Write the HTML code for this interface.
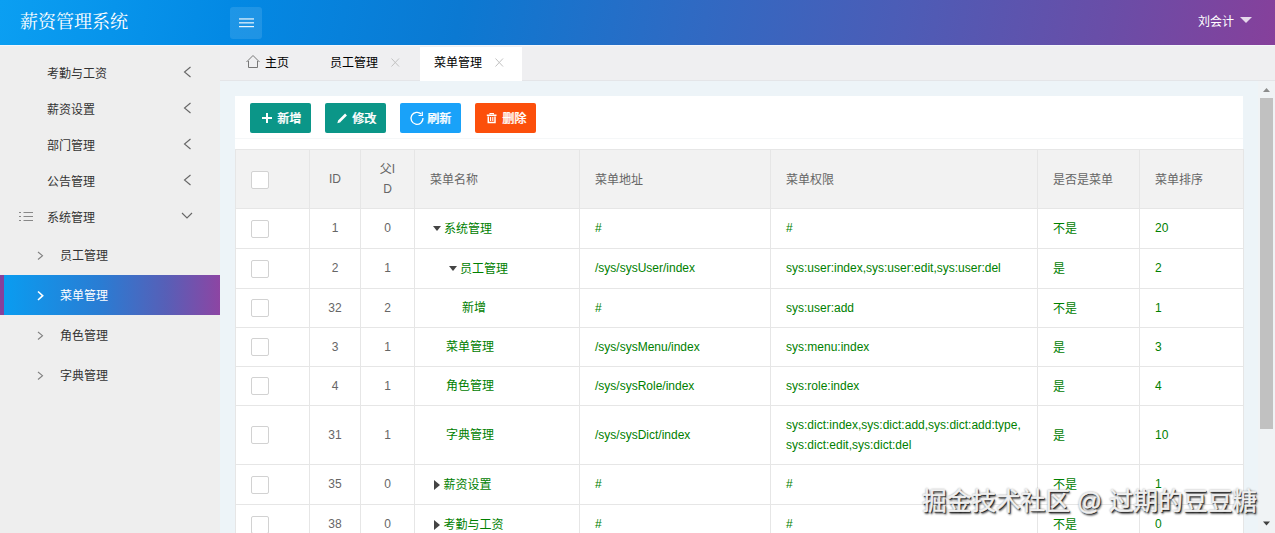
<!DOCTYPE html>
<html lang="zh-CN">
<head>
<meta charset="utf-8">
<title>薪资管理系统</title>
<style>
*{box-sizing:border-box;margin:0;padding:0}
html,body{width:1275px;height:533px;overflow:hidden;background:#eeeeee;font-family:"Liberation Sans","Noto Sans CJK SC",sans-serif;font-size:12px;color:#333}
#hdr{position:absolute;left:0;top:0;width:1275px;height:45px;background:linear-gradient(100deg,#0b9ff2 0%,#0389e4 18%,#0b79d2 36%,#2f6ac3 54%,#4d5cb6 71%,#6a4da7 87%,#86409b 100%)}
#hline{position:absolute;left:0;top:45px;width:1275px;height:1px;background:#f4f6fb}
#title{position:absolute;left:20px;top:10px;font-family:"Liberation Serif","Noto Serif CJK SC",serif;font-size:18px;line-height:24px;color:#fff;white-space:nowrap}
#ham{position:absolute;left:230px;top:7px;width:32px;height:32px;border-radius:3px;background:rgba(255,255,255,.11)}
#ham i{position:absolute;left:9px;width:15px;height:1.4px;background:#fff}
#user{position:absolute;left:1198px;top:14px;color:#fff;font-size:12px;line-height:16px;white-space:nowrap}
#caret{position:absolute;left:1240px;top:17px;width:0;height:0;border-left:6px solid transparent;border-right:6px solid transparent;border-top:6px solid rgba(255,255,255,.8)}
#side{position:absolute;left:0;top:46px;width:220px;height:487px;background:#eeeeee}
.mi{position:absolute;left:47px;font-size:12px;line-height:16px;color:#333;white-space:nowrap}
.si{position:absolute;left:60px;font-size:12px;line-height:16px;color:#333;white-space:nowrap}
#act{position:absolute;left:0;top:275px;width:220px;height:40px;background:linear-gradient(90deg,#0a9cf0 0%,#2a7cd3 45%,#575fb7 75%,#8d45a3 100%);border-left:4px solid #86409b}
svg{position:absolute;overflow:visible}
#tabs{position:absolute;left:220px;top:46px;width:1055px;height:35px;background:#efeff1;border-bottom:1px solid #e4e5e8}
#tabact{position:absolute;left:420px;top:47px;width:102px;height:34px;background:#fff}
.tb{position:absolute;top:55px;font-size:12px;line-height:16px;color:#000;white-space:nowrap}
#main{position:absolute;left:220px;top:81px;width:1040px;height:452px;background:#edf4f8}
#panel{position:absolute;left:235px;top:96px;width:1008px;height:437px;background:#fff}
#pline{position:absolute;left:235px;top:138px;width:1008px;height:1px;background:#f5f7f8}
.btn{position:absolute;top:103px;width:61px;height:30px;border-radius:2px;color:#fff;font-size:12px;line-height:30px;white-space:nowrap;font-weight:normal;text-shadow:.7px 0 0 #fff}
.btn span{position:absolute;left:27px;top:1px}
#sb{position:absolute;left:1258px;top:81px;width:17px;height:452px;background:#f0f3f5}
#thumb{position:absolute;left:1260px;top:98px;width:13px;height:331px;background:#c1c1c1}
table{position:absolute;left:235px;top:149px;border-collapse:collapse;table-layout:fixed;width:1008px;font-size:12px}
td,th{border:1px solid #e6e6e6;padding:0 15px 1px;text-align:left;font-weight:normal;color:#008000;line-height:20px;vertical-align:middle;white-space:nowrap}
th{background:#f2f2f2;color:#666;height:59px}
td.c,th.c{text-align:center;color:#666;padding:0 0 1px}
td.z,th.z{padding:1px 15px 0}
.cb{display:inline-block;width:18px;height:18px;border:1px solid #d2d2d2;border-radius:2px;background:#fff;vertical-align:middle;position:relative;top:0}
.ar{display:inline-block;width:0;height:0;vertical-align:middle;position:relative}
.ad{border-left:4.5px solid transparent;border-right:4.5px solid transparent;border-top:5px solid #444;margin:0 3px 0 3px;top:-1px}
.arr{border-top:5px solid transparent;border-bottom:5px solid transparent;border-left:6.5px solid #444;margin:0 4px 0 3.5px;top:-1px}
#wm{position:absolute;left:922px;top:485px;-webkit-text-stroke:.5px #f0f0f0;font-size:24.7px;line-height:34px;color:#f0f0f0;white-space:nowrap;text-shadow:1px 1px 0 rgba(0,0,0,.7),1.5px 1.5px 2px rgba(0,0,0,.75),0 0 2px rgba(0,0,0,.45)}
</style>
</head>
<body>
<div id="hdr"></div><div id="hline"></div>
<div id="title">薪资管理系统</div>
<div id="ham"></div>
<svg style="left:0;top:0" width="300" height="45" fill="#fff"><rect x="239" y="18.400" width="15" height="1.100"/><rect x="239" y="22.300" width="15" height="1.100"/><rect x="239" y="26.100" width="15" height="1.100"/></svg>
<div id="user">刘会计</div><div id="caret"></div>

<div id="side"></div>
<div class="mi" style="top:66px">考勤与工资</div>
<div class="mi" style="top:102px">薪资设置</div>
<div class="mi" style="top:138px">部门管理</div>
<div class="mi" style="top:174px">公告管理</div>
<div class="mi" style="top:210px">系统管理</div>
<svg style="left:0;top:0" width="220" height="533" fill="none" stroke="#666" stroke-width="1.1">
<path d="M190.5 67 L184.5 72 L190.5 77"/>
<path d="M190.5 103 L184.5 108 L190.5 113"/>
<path d="M190.5 139 L184.5 144 L190.5 149"/>
<path d="M190.5 175 L184.5 180 L190.5 185"/>
<path d="M182 213 L187 218 L192 213"/>
<path d="M19 212.5h2M23.5 212.5h9.5M19 216.5h2M23.5 216.5h9.5M19 220.5h2M23.5 220.5h9.5" stroke="#888" stroke-width="1"/>
<path d="M38 252 L42.5 255.7 L38 259.5" stroke="#808080"/>
<path d="M38 332 L42.5 335.7 L38 339.5" stroke="#808080"/>
<path d="M38 372 L42.5 375.7 L38 379.5" stroke="#808080"/>
</svg>
<div id="act"></div>
<svg style="left:0;top:0" width="220" height="533" fill="none" stroke="#fff" stroke-width="1.6"><path d="M38 291.5 L42.7 295.7 L38 300"/></svg>
<div class="si" style="top:248px">员工管理</div>
<div class="si" style="top:288px;color:#fff">菜单管理</div>
<div class="si" style="top:328px">角色管理</div>
<div class="si" style="top:368px">字典管理</div>

<div id="tabs"></div>
<div id="tabact"></div>
<svg style="left:0;top:0" width="600" height="90" fill="none" stroke="#777" stroke-width="1">
<path d="M246.5 62 L253 55.5 L259.5 62"/><path d="M248.5 61 V67.5 H257.5 V61"/>
<path d="M391.5 58.5 L399 66.5 M399 58.5 L391.5 66.5" stroke="#c2c2c2"/>
<path d="M495.5 58.5 L503 66.5 M503 58.5 L495.5 66.5" stroke="#c2c2c2"/>
</svg>
<div class="tb" style="left:265px">主页</div>
<div class="tb" style="left:330px">员工管理</div>
<div class="tb" style="left:434px">菜单管理</div>

<div id="main"></div>
<div id="panel"></div><div id="pline"></div>
<div class="btn" style="left:250px;background:#0b9688"><span>新增</span></div>
<div class="btn" style="left:325px;background:#0b9688"><span>修改</span></div>
<div class="btn" style="left:400px;background:#19a2f9"><span>刷新</span></div>
<div class="btn" style="left:475px;background:#fc4f0b"><span>删除</span></div>
<svg style="left:0;top:0" width="600" height="140" fill="none" stroke="#fff">
<path d="M262 118h10M267 113v10" stroke-width="2"/>
<path d="M339 121.5 L346 114.5" stroke-width="2.6"/><path d="M337.3 123.2 L338.2 120.2 L340.3 122.3 Z" fill="#fff" stroke="none"/>
<path d="M421.2 114 A6 6 0 1 0 423 118" stroke-width="1.3"/><path d="M418.5 115.5 H422.3 V111.7" stroke-width="1.2"/>
<path d="M486.800 115.300h9.700" stroke-width="1.600"/><path d="M490 114.500v-1h3.400v1" stroke-width="1.100"/><path d="M488.300 116.500V122.400H495V116.500" stroke-width="1.500"/><path d="M490.600 117v4M492.800 117v4" stroke-width="1.100"/>
</svg>

<table>
<colgroup><col style="width:74px"><col style="width:51px"><col style="width:54px"><col style="width:165px"><col style="width:191px"><col style="width:267px"><col style="width:102px"><col style="width:104px"></colgroup>
<tr><th class="z"><span class="cb"></span></th><th class="c">ID</th><th class="c">父I<br>D</th><th class="z">菜单名称</th><th class="z">菜单地址</th><th class="z">菜单权限</th><th class="z">是否是菜单</th><th class="z">菜单排序</th></tr>
<tr style="height:40px"><td><span class="cb"></span></td><td class="c">1</td><td class="c">0</td><td class="z"><i class="ar ad"></i>系统管理</td><td>#</td><td>#</td><td class="z">不是</td><td>20</td></tr>
<tr style="height:40px"><td><span class="cb"></span></td><td class="c">2</td><td class="c">1</td><td style="padding-top:1px;padding-bottom:0;padding-left:31px"><i class="ar ad"></i>员工管理</td><td>/sys/sysUser/index</td><td>sys:user:index,sys:user:edit,sys:user:del</td><td class="z">是</td><td>2</td></tr>
<tr style="height:39px"><td><span class="cb"></span></td><td class="c">32</td><td class="c">2</td><td style="padding-left:47px">新增</td><td>#</td><td>sys:user:add</td><td class="z">不是</td><td>1</td></tr>
<tr style="height:39px"><td><span class="cb"></span></td><td class="c">3</td><td class="c">1</td><td style="padding-left:31px">菜单管理</td><td>/sys/sysMenu/index</td><td>sys:menu:index</td><td class="z">是</td><td>3</td></tr>
<tr style="height:39px"><td><span class="cb"></span></td><td class="c">4</td><td class="c">1</td><td style="padding-left:31px">角色管理</td><td>/sys/sysRole/index</td><td>sys:role:index</td><td class="z">是</td><td>4</td></tr>
<tr style="height:59px"><td><span class="cb"></span></td><td class="c">31</td><td class="c">1</td><td style="padding-left:31px">字典管理</td><td>/sys/sysDict/index</td><td>sys:dict:index,sys:dict:add,sys:dict:add:type,<br>sys:dict:edit,sys:dict:del</td><td class="z">是</td><td>10</td></tr>
<tr style="height:40px"><td><span class="cb"></span></td><td class="c">35</td><td class="c">0</td><td class="z"><i class="ar arr"></i>薪资设置</td><td>#</td><td>#</td><td class="z">不是</td><td>1</td></tr>
<tr style="height:40px"><td><span class="cb"></span></td><td class="c">38</td><td class="c">0</td><td class="z"><i class="ar arr"></i>考勤与工资</td><td>#</td><td>#</td><td class="z">不是</td><td>0</td></tr>
</table>

<div id="sb"></div><div id="thumb"></div>
<svg style="left:1260px;top:81px" width="15" height="452"><path d="M3 11 L6.500 7 L10 11Z" fill="#8c8c8c"/><path d="M3 440.500 L6.500 444.500 L10 440.500Z" fill="#404040"/></svg>
<div id="wm">掘金技术社区 @ 过期的豆豆糖</div>
</body>
</html>
